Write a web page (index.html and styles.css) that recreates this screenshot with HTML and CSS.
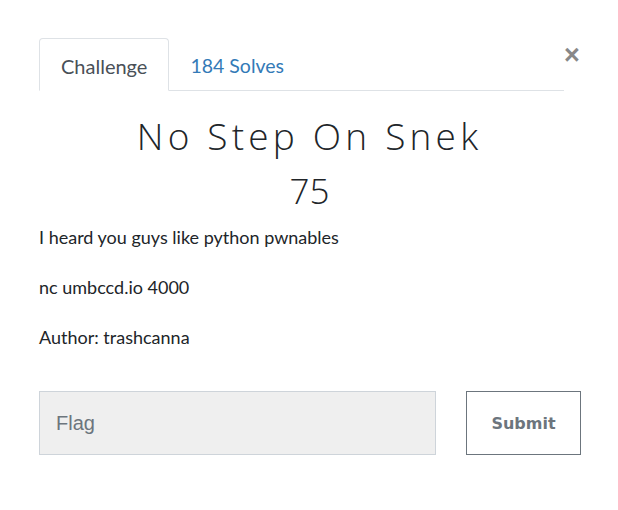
FILE: index.html
```html
<!DOCTYPE html>
<html>
<head>
<meta charset="utf-8">
<link rel="stylesheet" href="styles.css">
</head>
<body>
<div class="modal">
  <button class="close" aria-label="Close">&times;</button>
  <ul class="tabs">
    <li class="tab active">Challenge</li>
    <li class="tab link">184 Solves</li>
  </ul>
  <h2 class="title">No Step On Snek</h2>
  <h3 class="value">75</h3>
  <div class="desc">
    <p>I heard you guys like python pwnables</p>
    <p>nc umbccd.io 4000</p>
    <p>Author: trashcanna</p>
  </div>
  <form class="submit-row">
    <input class="flag" type="text" placeholder="Flag">
    <button class="submit" type="button">Submit</button>
  </form>
</div>
</body>
</html>
```
FILE: styles.css
```css
html, body {
  margin: 0;
  padding: 0;
  background: #fff;
}
body {
  font-family: Lato, "Noto Sans", sans-serif;
  color: #212529;
}
.modal {
  position: relative;
  width: 618px;
  height: 510px;
  box-sizing: border-box;
  padding: 38px 38px 0 39px;
}
.close {
  position: absolute;
  top: 42px;
  left: 564px;
  border: 0;
  background: none;
  padding: 0;
  font-family: "Liberation Sans", Arial, sans-serif;
  font-weight: bold;
  font-size: 27px;
  line-height: 27px;
  color: #888;
  cursor: pointer;
}
.tabs {
  list-style: none;
  margin: 0;
  padding: 0;
  display: flex;
  width: 525px;
  border-bottom: 1px solid #dee2e6;
}
.tab {
  font-size: 20px;
  line-height: 24px;
  padding: 15px 21px 12px 21px;
  margin-bottom: -1px;
  border: 1px solid transparent;
  border-radius: 4px 4px 0 0;
}
.tab.active {
  color: #495057;
  border-color: #dee2e6 #dee2e6 #fff;
  background: #fff;
}
.tab.link {
  color: #337ab7;
  padding-left: 20px;
  font-size: 19.5px;
}
.title {
  font-family: "Open Sans", sans-serif;
  font-weight: 300;
  font-size: 37px;
  line-height: 48px;
  letter-spacing: 4.2px;
  text-align: center;
  margin: 21px 0 0 0;
  color: #212529;
}
.value {
  font-family: "Open Sans", sans-serif;
  font-weight: 300;
  font-size: 35px;
  line-height: 44px;
  text-align: center;
  margin: 9px 0 0 0;
  color: #212529;
}
.desc {
  margin-top: 11px;
}
.desc p {
  font-size: 18px;
  line-height: 27px;
  margin: 0 0 23px 0;
}
.submit-row {
  display: flex;
  gap: 30px;
  margin-top: 40px;
  width: 542px;
}
.flag {
  width: 397px;
  height: 64px;
  box-sizing: border-box;
  background: #efefef;
  border: 1px solid #ced4da;
  padding: 0 16px;
  font-family: "Liberation Sans", Arial, sans-serif;
  font-size: 20px;
  color: #495057;
}
.flag::placeholder {
  color: #6c757d;
}
.submit {
  width: 115px;
  height: 64px;
  box-sizing: border-box;
  background: #fff;
  border: 1px solid #6c757d;
  border-radius: 0;
  font-family: "DejaVu Sans", sans-serif;
  font-weight: bold;
  font-size: 16px;
  color: #6c757d;
}
```
